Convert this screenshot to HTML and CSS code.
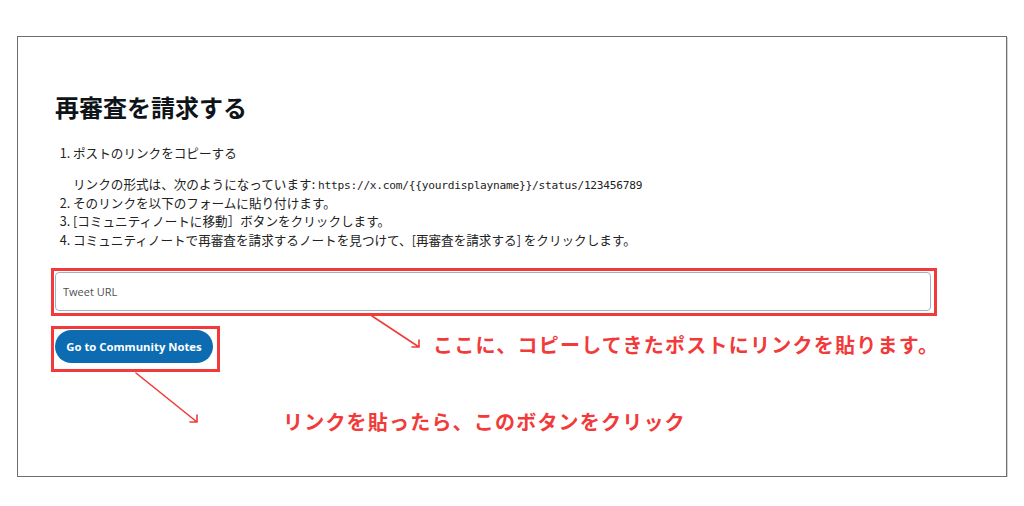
FILE: index.html
```html
<!DOCTYPE html>
<html lang="ja">
<head>
    <meta charset="UTF-8">
    <meta name="viewport" content="width=device-width, initial-scale=1.0">
    <title>再審査を請求する</title>
    <link rel="stylesheet" href="styles.css">
</head>
<body>
    <div class="frame">
        <!-- annotation arrows -->
        <svg class="arrows" width="990" height="440" viewBox="17 36 990 440">
            <g stroke="#f23a3a" stroke-width="1.6" fill="none" stroke-linecap="round">
                <path d="M372 316 L419 347 M412 347 L419 347 L419 340"/>
                <path d="M136 373 L197 422 M190 422 L197 422 L197 415"/>
            </g>
        </svg>

        <h1>再審査を請求する</h1>

        <ol class="steps">
            <li>ポストのリンクをコピーする
                <p class="hint">リンクの形式は、次のようになっています: <code>https://x.com/{{yourdisplayname}}/status/123456789</code></p>
            </li>
            <li>そのリンクを以下のフォームに貼り付けます。</li>
            <li>[コミュニティノートに移動］ボタンをクリックします。</li>
            <li>コミュニティノートで再審査を請求するノートを見つけて、[再審査を請求する] をクリックします。</li>
        </ol>

        <div class="mark mark-input">
            <input type="text" class="url-input" placeholder="Tweet URL">
        </div>

        <div class="btn-row">
            <div class="mark mark-btn">
                <button class="go-btn">Go to Community Notes</button>
            </div>
            <p class="note note-input">ここに、コピーしてきたポストにリンクを貼ります。</p>
        </div>

        <p class="note note-btn">リンクを貼ったら、このボタンをクリック</p>
    </div>
</body>
</html>
```

FILE: styles.css
```css
/* Base */
body {
    margin: 0;
    background: #fff;
    font-family: "Noto Sans CJK JP", sans-serif;
    color: #222;
}

/* outer frame */
.frame {
    position: relative;
    box-sizing: border-box;
    height: 441px;
    margin: 36px 17px 0;
    padding: 54px 0 0 37px;
    border: 1px solid #6e6e6e;
    box-shadow: 1px 1px 0 #d4d4d4;
}

.arrows {
    position: absolute;
    top: -1px;
    left: -1px;
    pointer-events: none;
}

h1 {
    margin: 0;
    font-size: 24px;
    line-height: 32px;
    font-weight: 700;
    color: #0f1419;
}

/* steps */
.steps {
    margin: 21px 0 0;
    padding-left: 18px;
    font-size: 12.6px;
    line-height: 18.5px;
}

.hint {
    margin: 12.5px 0 0;
}

code {
    font-family: "DejaVu Sans Mono", monospace;
    font-size: 11.2px;
    line-height: 1;
    letter-spacing: -0.25px;
}

/* red annotation boxes */
.mark {
    box-sizing: border-box;
    border: 3px solid #f23a3a;
    margin-left: -4px;
}

.mark-input {
    width: 886px;
    margin-top: 19px;
    padding: 1px 3px 2px 1px;
}

.url-input {
    display: block;
    box-sizing: border-box;
    width: 100%;
    height: 39px;
    padding: 0 7px;
    border: 1px solid #9fb1c0;
    border-radius: 4px;
    font-family: "Open Sans", sans-serif;
    font-size: 11px;
}

.url-input::placeholder {
    color: #505050;
}

.btn-row {
    display: flex;
    align-items: center;
    margin-top: 10px;
}

.mark-btn {
    padding: 1px 4px 6px 1px;
}

.go-btn {
    display: block;
    width: 158px;
    height: 33px;
    border: none;
    border-radius: 17px;
    background: #0d6bb2;
    color: #fff;
    font-family: "Open Sans", sans-serif;
    font-size: 11.3px;
    font-weight: 700;
}

/* annotation notes */
.note {
    margin: 0;
    font-size: 20px;
    line-height: 24px;
    font-weight: 700;
    color: #f23a3a;
}

.note-input {
    margin: 0 0 8px 213px;
    letter-spacing: 1.25px;
}

.note-btn {
    margin: 38px 0 0 228px;
    letter-spacing: 1.2px;
}
```
